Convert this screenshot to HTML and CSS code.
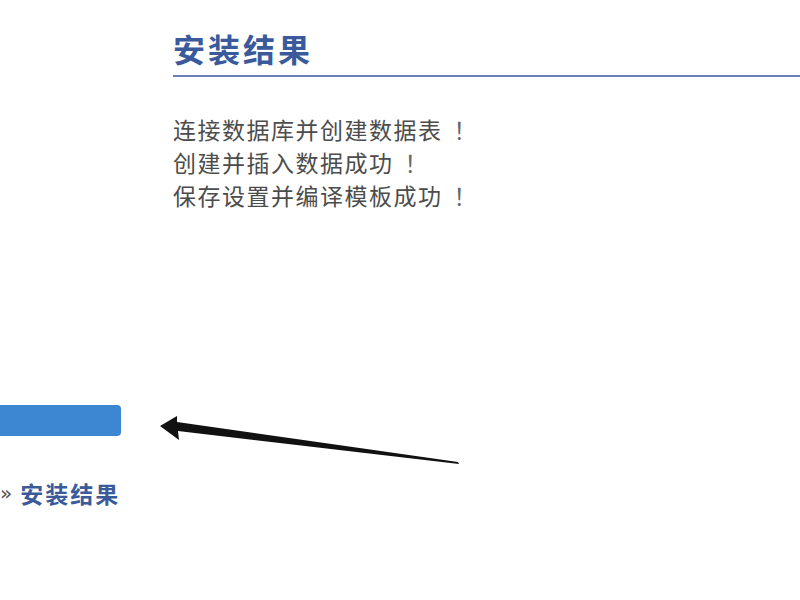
FILE: index.html
```html
<!DOCTYPE html>
<html lang="zh-CN">
<head>
<meta charset="utf-8">
<title>安装结果</title>
<link rel="stylesheet" href="styles.css">
</head>
<body>
<div class="page">
  <aside class="sidebar">
    <div class="progress-bar"></div>
    <div class="crumb"><span class="raquo">»</span><span class="crumb-current">安装结果</span></div>
  </aside>
  <main class="main">
    <h1 class="title">安装结果</h1>
    <div class="result">
      <p>连接数据库并创建数据表<span class="bang">！</span></p>
      <p>创建并插入数据成功<span class="bang">！</span></p>
      <p>保存设置并编译模板成功<span class="bang">！</span></p>
    </div>
  </main>
  <svg class="arrow" width="320" height="60" viewBox="0 0 320 60" aria-hidden="true">
    <polygon points="10,16 27,6 27,12 308,52 309,54 28,21 29,30" fill="#111"/>
  </svg>
</div>
</body>
</html>
```

FILE: styles.css
```css
html, body {
  margin: 0;
  padding: 0;
  background: #ffffff;
}
body {
  font-family: "Noto Sans CJK SC", "Noto Sans", sans-serif;
  width: 800px;
  height: 600px;
  overflow: hidden;
}
.page {
  position: relative;
  display: flex;
  gap: 52px;
  height: 600px;
}
.sidebar {
  width: 121px;
  flex: none;
  padding-top: 405px;
}
.progress-bar {
  height: 31px;
  background: #3d86d2;
  border-radius: 0 4px 4px 0;
}
.crumb {
  margin-top: 42px;
  display: flex;
  align-items: center;
  gap: 8px;
  font-size: 23px;
  line-height: 30px;
  font-weight: 700;
  color: #3a5a9a;
}
.raquo {
  font-size: 20px;
  font-weight: 400;
  color: #555;
  font-family: "DejaVu Sans", sans-serif;
}
.crumb-current {
  letter-spacing: 2px;
}
.main {
  flex: 1;
  padding-top: 24px;
}
.title {
  margin: 0;
  font-size: 32px;
  line-height: 48px;
  font-weight: 700;
  letter-spacing: 3px;
  color: #3a5a9c;
  padding-bottom: 3px;
  border-bottom: 2px solid #6a80b6;
}
.result {
  margin-top: 36px;
  color: #4c4c4c;
  font-size: 23px;
  line-height: 33px;
  letter-spacing: 1.5px;
}
.result p {
  margin: 0;
}
.bang {
  display: inline-block;
  padding-left: 11px;
  color: #666;
}
.arrow {
  position: absolute;
  left: 150px;
  top: 410px;
}
```
